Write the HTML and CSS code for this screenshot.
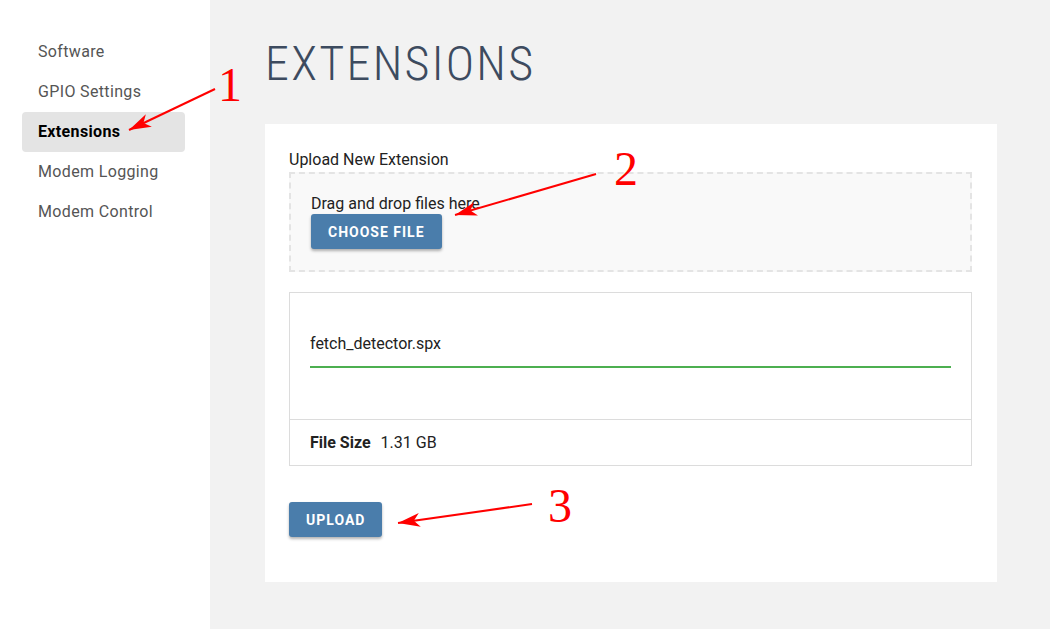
FILE: index.html
```html
<!DOCTYPE html>
<html>
<head>
<meta charset="utf-8">
<link rel="stylesheet" href="styles.css">
</head>
<body>
<div class="app">
  <aside class="sidebar">
    <nav class="nav">
      <a class="nav-item">Software</a>
      <a class="nav-item">GPIO Settings</a>
      <a class="nav-item active">Extensions</a>
      <a class="nav-item">Modem Logging</a>
      <a class="nav-item">Modem Control</a>
    </nav>
  </aside>
  <main class="main">
    <h1 class="title">EXTENSIONS</h1>
    <section class="card">
      <label class="label">Upload New Extension</label>
      <div class="dropzone">
        <div class="drop-text">Drag and drop files here</div>
        <button class="btn">Choose File</button>
      </div>
      <div class="filebox">
        <div class="filebox-top">
          <div class="field">fetch_detector.spx</div>
        </div>
        <div class="filebox-bottom">
          <span class="key">File Size</span>
          <span class="val">1.31 GB</span>
        </div>
      </div>
      <button class="btn upload">Upload</button>
    </section>
  </main>
</div>
<svg class="annot" width="1050" height="629" viewBox="0 0 1050 629">
  <defs>
    <marker id="ah" markerUnits="userSpaceOnUse" markerWidth="24" markerHeight="16" refX="22" refY="7" orient="auto">
      <path d="M0,0 L22,7 L0,14 L6,7 z" fill="#ff0000"/>
    </marker>
  </defs>
  <line x1="215" y1="89" x2="129" y2="130" stroke="#ff0000" stroke-width="2" marker-end="url(#ah)"/>
  <line x1="596" y1="174" x2="455" y2="215" stroke="#ff0000" stroke-width="2" marker-end="url(#ah)"/>
  <line x1="532" y1="504" x2="398" y2="523" stroke="#ff0000" stroke-width="2" marker-end="url(#ah)"/>
  <text class="num" x="230" y="101">1</text>
  <text class="num" x="626" y="185">2</text>
  <text class="num" x="560" y="522">3</text>
</svg>
</body>
</html>
```
FILE: styles.css
```css
html, body {
  margin: 0;
  padding: 0;
}
body {
  font-family: Roboto, "Liberation Sans", sans-serif;
  width: 1050px;
  height: 629px;
  overflow: hidden;
  position: relative;
  color: #222;
}
.app {
  display: flex;
  height: 629px;
}
.sidebar {
  width: 210px;
  background: #fff;
  flex: none;
}
.nav {
  display: flex;
  flex-direction: column;
  padding-top: 32px;
}
.nav-item {
  display: block;
  margin-left: 22px;
  width: 163px;
  height: 40px;
  line-height: 40px;
  padding-left: 16px;
  box-sizing: border-box;
  font-size: 16px;
  letter-spacing: 0.35px;
  color: #555;
  border-radius: 4px;
}
.nav-item.active {
  background: #e4e4e4;
  color: #000;
  font-weight: 700;
}
.main {
  flex: 1;
  background: #f2f2f2;
  padding: 40px 0 0 55px;
}
.title {
  margin: 0;
  height: 48px;
  line-height: 48px;
  font-family: "Roboto Condensed", "DejaVu Sans Condensed", Roboto, sans-serif;
  font-weight: 300;
  font-size: 48px;
  letter-spacing: 2.3px;
  color: #3d4b5f;
}
.card {
  margin-top: 36px;
  width: 732px;
  box-sizing: border-box;
  background: #fff;
  padding: 26px 25px 45px 24px;
}
.label {
  display: block;
  font-size: 16px;
  line-height: 20px;
  margin-bottom: 2px;
  color: #222;
}
.dropzone {
  border: 2px dashed #e4e4e4;
  background: #f9f9f9;
  padding: 20px 20px 21px 20px;
}
.drop-text {
  font-size: 16px;
  line-height: 19px;
  margin-bottom: 1px;
}
.btn {
  display: inline-block;
  height: 35px;
  padding: 1px 17px 0;
  border: none;
  border-radius: 3px;
  background: #4a7dab;
  color: #fff;
  font-family: Roboto, "Liberation Sans", sans-serif;
  font-weight: 700;
  font-size: 14px;
  letter-spacing: 1px;
  text-transform: uppercase;
  box-shadow: 0 2px 3px rgba(0, 0, 0, 0.3);
}
.filebox {
  margin-top: 20px;
  border: 1px solid #dcdcdc;
}
.filebox-top {
  height: 127px;
  box-sizing: border-box;
  padding: 21px 20px 0 20px;
  border-bottom: 1px solid #dcdcdc;
}
.field {
  font-size: 16px;
  line-height: 19px;
  padding: 20px 0 13px 0;
  border-bottom: 2px solid #4caf50;
}
.filebox-bottom {
  height: 45px;
  display: flex;
  align-items: center;
  padding: 0 20px;
  font-size: 16px;
}
.key {
  font-weight: 700;
  margin-right: 10px;
}
.upload {
  margin-top: 36px;
}
.annot {
  position: absolute;
  left: 0;
  top: 0;
  pointer-events: none;
}
.num {
  font-family: "Liberation Serif", serif;
  font-size: 48px;
  fill: #ff0000;
  text-anchor: middle;
}
```
